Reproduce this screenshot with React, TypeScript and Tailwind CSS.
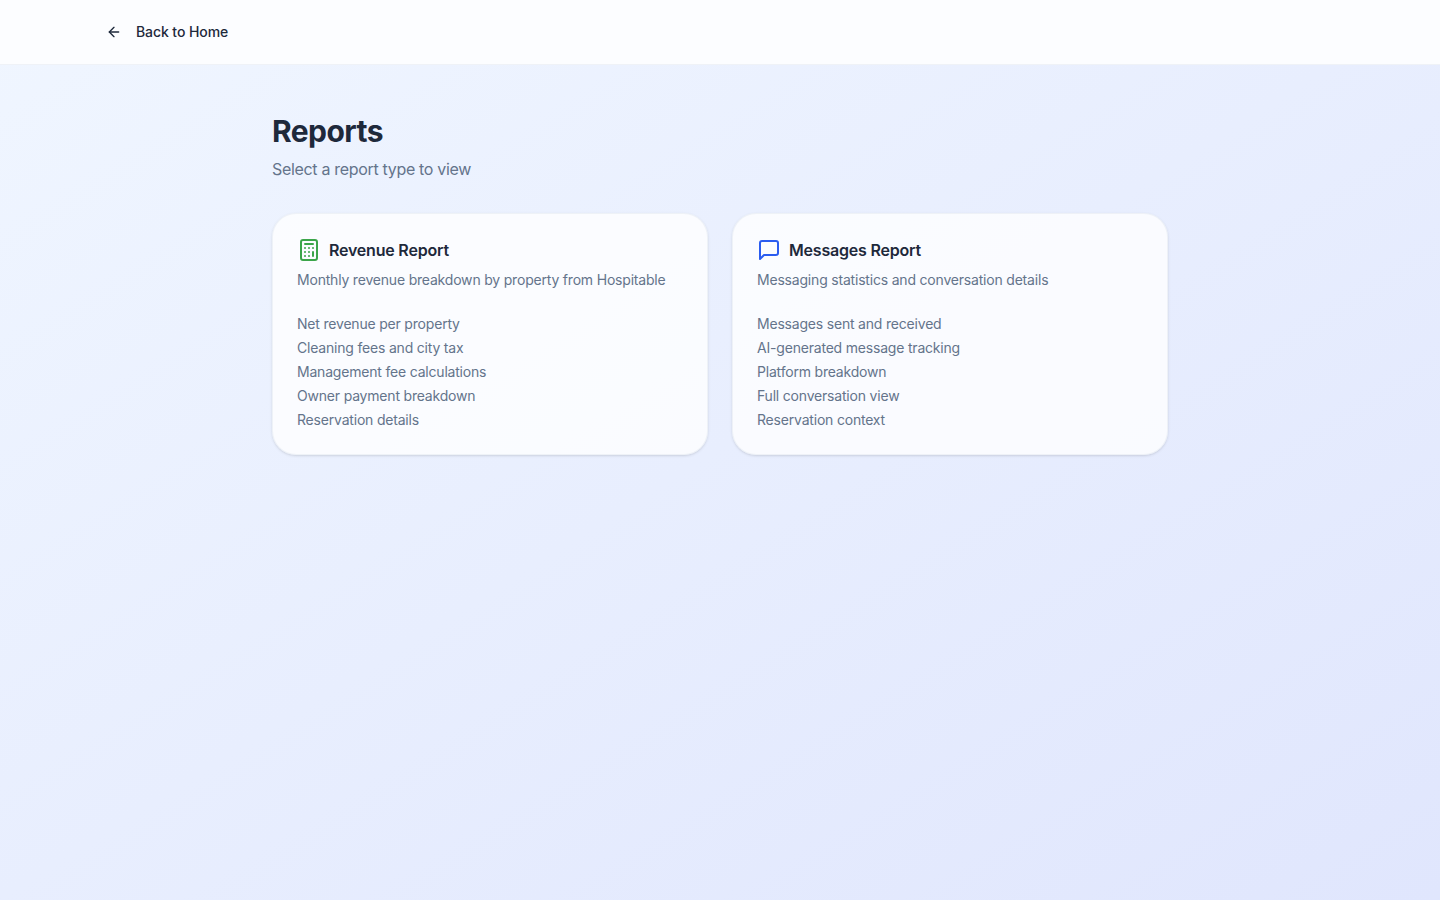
import React from "react";
import { ArrowLeft, Calculator } from "lucide-react";

const MessageIcon = () => (
  <svg
    className="w-6 h-6 text-[#2a5cf0]"
    viewBox="0 0 24 24"
    fill="none"
    stroke="currentColor"
    strokeWidth="2"
    strokeLinecap="round"
    strokeLinejoin="round"
  >
    <path d="M21 15a2 2 0 0 1-2 2H7l-4 4V5a2 2 0 0 1 2-2h14a2 2 0 0 1 2 2z" />
  </svg>
);

const reports = [
  {
    title: "Revenue Report",
    description: "Monthly revenue breakdown by property from Hospitable",
    icon: <Calculator className="w-6 h-6 text-[#3ba54a]" />,
    items: [
      "Net revenue per property",
      "Cleaning fees and city tax",
      "Management fee calculations",
      "Owner payment breakdown",
      "Reservation details",
    ],
  },
  {
    title: "Messages Report",
    description: "Messaging statistics and conversation details",
    icon: <MessageIcon />,
    items: [
      "Messages sent and received",
      "AI-generated message tracking",
      "Platform breakdown",
      "Full conversation view",
      "Reservation context",
    ],
  },
];

const App = () => {
  return (
    <div className="min-h-screen bg-gradient-to-br from-[#f0f6ff] via-[#e8eefe] to-[#e0e6fd] font-['Inter',sans-serif] text-[#1e293b]">
      <header className="border-b border-slate-200/50 bg-[#fcfdff]">
        <div className="flex h-16 items-center px-[94px]">
          <button className="flex h-9 items-center gap-3.5 rounded-md px-3 text-sm font-medium tracking-[-0.006em] text-[#1e293b]">
            <ArrowLeft className="w-4 h-4" />
            Back to Home
          </button>
        </div>
      </header>

      <main className="mx-auto max-w-4xl pt-12">
        <div className="mb-8">
          <h1 className="mb-2 text-3xl font-bold tracking-[-0.019em]">Reports</h1>
          <p className="tracking-[-0.02em] text-[#64748b]">Select a report type to view</p>
        </div>

        <div className="grid grid-cols-2 gap-6">
          {reports.map((report) => (
            <div
              key={report.title}
              className="cursor-pointer rounded-3xl border border-slate-200/50 bg-white/78 p-6 shadow-sm"
            >
              <div className="mb-2 flex items-center gap-2">
                {report.icon}
                <h2 className="font-semibold tracking-[-0.013em]">{report.title}</h2>
              </div>
              <p className="text-sm tracking-[-0.014em] text-[#64748b]">{report.description}</p>
              <ul className="mt-6 space-y-1 text-sm tracking-[-0.014em] text-[#64748b]">
                {report.items.map((item) => (
                  <li key={item}>{item}</li>
                ))}
              </ul>
            </div>
          ))}
        </div>
      </main>
    </div>
  );
};

export default App;
